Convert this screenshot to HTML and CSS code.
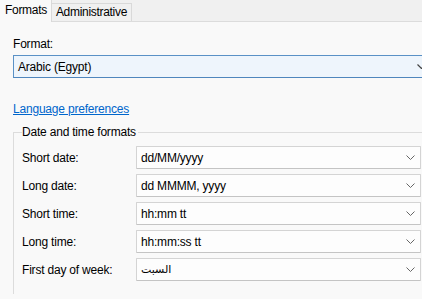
FILE: index.html
```html
<!DOCTYPE html>
<html>

<head>
  <meta name="viewport" content="width=device-width, initial-scale=1">
  <link rel="stylesheet" href="styles.css">
</head>

<body>
  <div class="tabs">
    <div class="tab active">Formats</div>
    <div class="tab">Administrative</div>
  </div>

  <div class="page">
    <div class="label">Format:</div>
    <div class="combo main">
      <span>Arabic (Egypt)</span>
      <svg class="chev" width="9" height="5" viewBox="0 0 9 5"><path d="M0.5 0.5 L4.5 4.5 L8.5 0.5" fill="none" stroke="#444" stroke-width="1.2"/></svg>
    </div>

    <a href="#" class="link">Language preferences</a>

    <!-- Date and time group -->
    <fieldset class="group">
      <legend>Date and time formats</legend>

      <div class="row">
        <span class="name">Short date:</span>
        <div class="combo">
          <span>dd/MM/yyyy</span>
          <svg class="chev" width="9" height="5" viewBox="0 0 9 5"><path d="M0.5 0.5 L4.5 4.5 L8.5 0.5" fill="none" stroke="#666" stroke-width="1"/></svg>
        </div>
      </div>
      <div class="row">
        <span class="name">Long date:</span>
        <div class="combo">
          <span>dd MMMM, yyyy</span>
          <svg class="chev" width="9" height="5" viewBox="0 0 9 5"><path d="M0.5 0.5 L4.5 4.5 L8.5 0.5" fill="none" stroke="#666" stroke-width="1"/></svg>
        </div>
      </div>
      <div class="row">
        <span class="name">Short time:</span>
        <div class="combo">
          <span>hh:mm tt</span>
          <svg class="chev" width="9" height="5" viewBox="0 0 9 5"><path d="M0.5 0.5 L4.5 4.5 L8.5 0.5" fill="none" stroke="#666" stroke-width="1"/></svg>
        </div>
      </div>
      <div class="row">
        <span class="name">Long time:</span>
        <div class="combo">
          <span>hh:mm:ss tt</span>
          <svg class="chev" width="9" height="5" viewBox="0 0 9 5"><path d="M0.5 0.5 L4.5 4.5 L8.5 0.5" fill="none" stroke="#666" stroke-width="1"/></svg>
        </div>
      </div>
      <div class="row">
        <span class="name">First day of week:</span>
        <div class="combo">
          <span class="ar">السبت</span>
          <svg class="chev" width="9" height="5" viewBox="0 0 9 5"><path d="M0.5 0.5 L4.5 4.5 L8.5 0.5" fill="none" stroke="#666" stroke-width="1"/></svg>
        </div>
      </div>
    </fieldset>
  </div>
</body>

</html>
```

FILE: styles.css
```css
* {
  box-sizing: border-box;
}

body {
  margin: 0;
  width: 422px;
  height: 299px;
  overflow: hidden;
  background: #f9f9f9;
  color: #000;
  font-family: "Liberation Sans", Arial, "Noto Sans", sans-serif;
  font-size: 12px;
  letter-spacing: -0.2px;
}

/* Tab strip */
.tabs {
  display: flex;
  align-items: flex-end;
  height: 22px;
  background: #f0f0f0;
  border-bottom: 1px solid #dcdcdc;
}

.tab {
  height: 18px;
  line-height: 17px;
  padding: 0 4px 0 4px;
  border: 1px solid #d9d9d9;
  border-bottom: none;
  border-left: none;
  background: #f0f0f0;
  letter-spacing: -0.3px;
}

.tab.active {
  height: 22px;
  line-height: 20px;
  margin-bottom: -1px;
  padding: 0 4px 0 5px;
  background: #f9f9f9;
  border-top: none;
}

/* Page content */
.page {
  padding: 15px 0 0 13px;
}

.label {
  height: 15px;
  line-height: 15px;
  margin-bottom: 3px;
}

.combo {
  display: flex;
  align-items: center;
  height: 23px;
  padding-left: 4px;
  background: #fdfdfd;
  border: 1px solid #d4d4d4;
  border-bottom-color: #c4c4c4;
  border-radius: 1px;
}

.combo .chev {
  margin-left: auto;
  margin-right: 5px;
}

.combo.main {
  width: 419px;
  background: #eef5fc;
  border: 1px solid #5a91c6;
  border-bottom-color: #4f86bd;
  border-radius: 0;
}

.link {
  display: inline-block;
  margin-top: 24px;
  line-height: 15px;
  color: #0066cc;
  text-decoration: underline;
}

/* Group box */
.group {
  margin: 8px 0 0 0;
  padding: 6px 0 8px 8px;
  width: 430px;
  border: 1px solid #dcdcdc;
  border-bottom: none;
  border-radius: 0;
}

.group legend {
  padding: 0 2px 0 0;
  margin-left: 0;
  line-height: 15px;
}

.row {
  display: flex;
  align-items: center;
  margin-bottom: 5px;
}

.row .name {
  width: 114px;
}

.row .combo {
  width: 285px;
}

.combo .ar {
  font-family: "DejaVu Sans", "Noto Sans", sans-serif;
  font-size: 11px;
  letter-spacing: 0;
}
```
